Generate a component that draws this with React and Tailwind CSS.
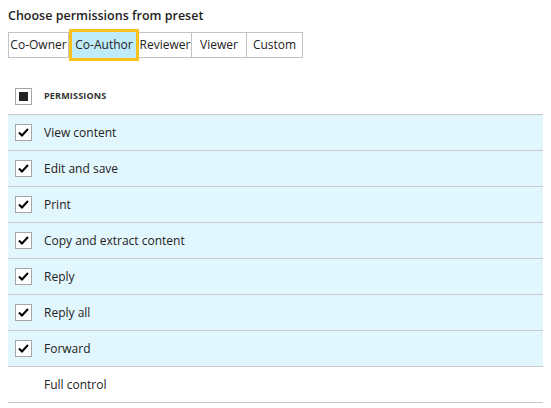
import React from "react";

const tabs = [
  { label: "Co-Owner", w: "w-[61px]" },
  { label: "Co-Author", w: "w-[70px]", active: true },
  { label: "Reviewer", w: "w-[53px]" },
  { label: "Viewer", w: "w-[55px]" },
  { label: "Custom", w: "w-[56px]" },
];

const permissions = [
  { name: "View content", checked: true },
  { name: "Edit and save", checked: true },
  { name: "Print", checked: true },
  { name: "Copy and extract content", checked: true },
  { name: "Reply", checked: true },
  { name: "Reply all", checked: true },
  { name: "Forward", checked: true },
  { name: "Full control", checked: false },
];

function Checkbox({ state }) {
  return (
    <div className="w-[17px] h-[17px] border border-[#a6a6a6] bg-white flex items-center justify-center shrink-0">
      {state === "checked" && (
        <svg width="13" height="13" viewBox="0 0 13 13">
          <path d="M2 6.5 L5 9.5 L11 3" fill="none" stroke="#000" strokeWidth="2" />
        </svg>
      )}
      {state === "partial" && <div className="w-[9px] h-[9px] bg-[#222]" />}
    </div>
  );
}

export default function App() {
  return (
    <div
      className="w-[551px] h-[408px] bg-white text-[#222] overflow-hidden"
      style={{ fontFamily: '"Open Sans", "Noto Sans", sans-serif' }}
    >
      <h1 className="pl-2 pt-[7px] text-[12.5px] leading-[18px] font-semibold text-[#1e1e1e]">
        Choose permissions from preset
      </h1>

      <div className="ml-2 mt-[7px] flex h-[26px]">
        {tabs.map((t, i) =>
          t.active ? (
            <div
              key={t.label}
              className={`${t.w} -my-[3px] h-[32px] border-[3px] border-[#f6c21b] bg-[#bfebf9] flex items-center justify-center text-[12px] relative z-10`}
            >
              {t.label}
            </div>
          ) : (
            <div
              key={t.label}
              className={`${t.w} border-y border-r border-[#c3c3c3] ${i === 0 ? "border-l" : ""} flex items-center justify-center text-[12px]`}
            >
              {t.label}
            </div>
          )
        )}
      </div>

      <div className="mx-2 mt-[20px] w-[535px]">
        <div className="h-[37px] border-b border-[#c8c8c8] flex items-center">
          <div className="w-[36px] pl-[7px] flex items-center">
            <Checkbox state="partial" />
          </div>
          <span className="text-[9px] font-bold tracking-[0.02em] text-[#333]">PERMISSIONS</span>
        </div>
        {permissions.map((p) => (
          <div
            key={p.name}
            className={`h-[36px] border-b border-[#c8c8c8] flex items-center ${p.checked ? "bg-[#e2f6fd]" : "bg-white"}`}
          >
            <div className="w-[36px] pl-[7px] flex items-center">
              {p.checked && <Checkbox state="checked" />}
            </div>
            <span className="text-[12px] text-[#222]">{p.name}</span>
          </div>
        ))}
      </div>
    </div>
  );
}
